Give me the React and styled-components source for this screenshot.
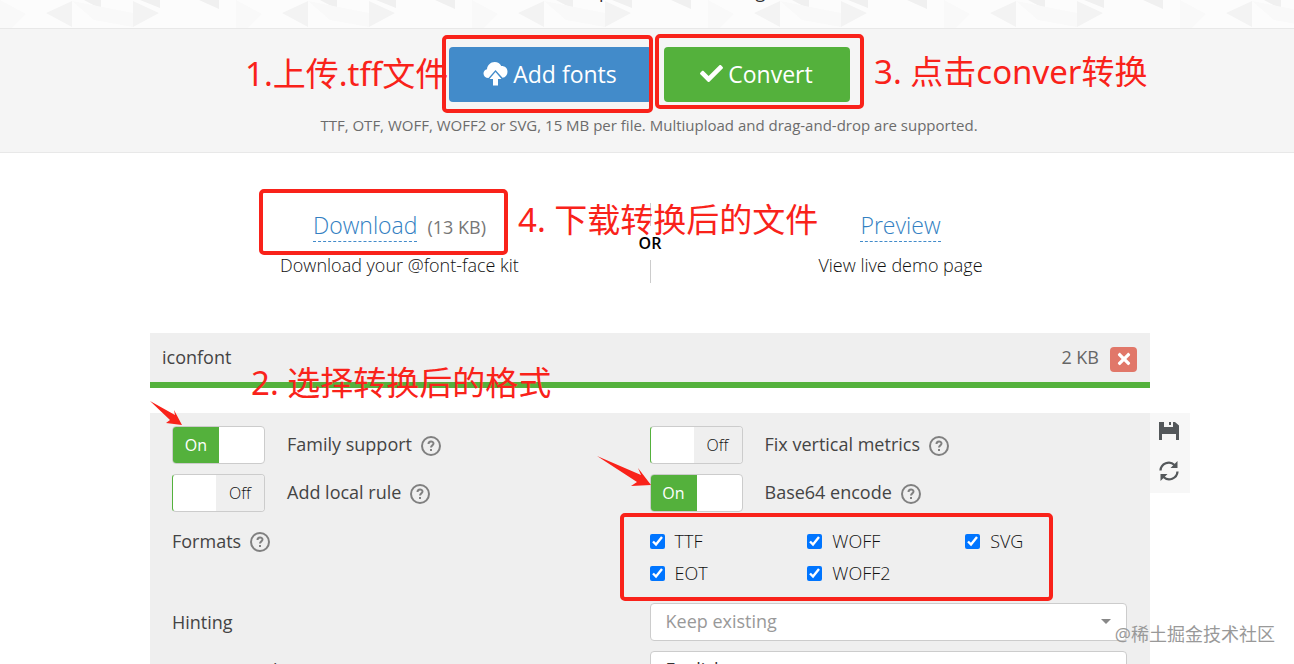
import React, { useState } from 'react';
import styled, { createGlobalStyle, css } from 'styled-components';
import { FaCheck, FaTimes } from 'react-icons/fa';

const formatList = ['TTF', 'WOFF', 'SVG', 'EOT', 'WOFF2'];

const UploadIcon = () => (
  <svg width="25" height="24" viewBox="0 0 25 24" fill="#fff" aria-hidden="true">
    <path d="M5.500 16C2.500 16 .5 14 .5 11.500c0-2.200 1.400-3.800 3.500-4.200C4.200 3.300 7.500 0 11.700 0c3 0 5.300 1.500 6.500 4 3.500-.2 6.300 2 6.300 5.700 0 3.200-2 5.600-5 6.100L12.500 8z" />
    <path d="M12.500 10l6 7h-3.500v6.500h-5V17H6.500z" />
  </svg>
);

const SaveIcon = () => (
  <svg width="20" height="18" viewBox="0 0 20 18" fill="#54585b" aria-hidden="true">
    <path d="M0 0h5v5h9V0h2l4 3.500V18h-3v-6H3v6H0z" />
    <path d="M10 0h2v3h-2z" />
  </svg>
);

const RefreshIcon = () => (
  <svg width="20" height="20" viewBox="0 0 20 20" aria-hidden="true">
    <path d="M1.500 9.500A8.300 8.300 0 0 1 15.500 4M18.500 10.500A8.300 8.300 0 0 1 4.500 16" fill="none" stroke="#54585b" strokeWidth="2.300" />
    <path d="M18.500 0v7h-7zM1.500 20v-7h7z" fill="#54585b" />
  </svg>
);

const HelpIcon = () => (
  <HelpSvg width="20" height="20" viewBox="0 0 20 20" aria-hidden="true">
    <circle cx="10" cy="10" r="9" />
    <path d="M7.500 8c0-3.200 5-3.200 5-.4C12.500 9.500 10 9.300 10 11.600M10 13v2" />
  </HelpSvg>
);

const Option = ({ id, label, defaultOn }) => {
  const [on, setOn] = useState(defaultOn);

  return (
    <OptionRow>
      <Switch $on={on}>
        <SwitchInput id={id} type="checkbox" checked={on} onChange={() => setOn(!on)} />
        <SwitchText $on={on}>{on ? 'On' : 'Off'}</SwitchText>
      </Switch>
      <OptionLabel htmlFor={id}>{label}</OptionLabel>
      <HelpIcon />
    </OptionRow>
  );
};

const App = () => {
  const [formats, setFormats] = useState(formatList);

  const toggleFormat = (name) => {
    setFormats(formats.includes(name) ? formats.filter(f => f !== name) : [...formats, name]);
  };

  return (
    <Page>
      <GlobalStyle />
      <Banner>
        <svg width="100%" height="28" aria-hidden="true">
          <defs>
            <pattern id="facets" width="236" height="28" patternUnits="userSpaceOnUse">
              <path d="M46 13l26-12v26zM133 1l26 12-26 14z" fill="#f3f3f3" />
              <path d="M84 0h17v9zM199 0h20v9zM140 0h20v8z" fill="#f0f0f0" />
              <path d="M72 1l61 12v14L94 20z" fill="#f9f9f9" />
              <path d="M0 0l26 14L12 28H0z" fill="#f9f9f9" />
            </pattern>
          </defs>
          <rect width="100%" height="28" fill="url(#facets)" />
        </svg>
        <Tagline>Modern and simple css @font-face generator</Tagline>
      </Banner>

      <Uploader>
        <ButtonRow>
          <BigButton $color="#428bca" $wide><UploadIcon />Add fonts</BigButton>
          <BigButton $color="#54b13c"><FaCheck aria-hidden="true" />Convert</BigButton>
        </ButtonRow>
        <Hint>TTF, OTF, WOFF, WOFF2 or SVG, 15 MB per file. Multiupload and drag-and-drop are supported.</Hint>
        <Frame $x={-205} $y={6} $w={211} $h={78} />
        <Frame $x={8} $y={5} $w={209} $h={75} />
        <Note $x={-402} $y={23}>1.上传.tff文件</Note>
        <Note $x={227} $y={21}>3. 点击conver转换</Note>
      </Uploader>

      <Container>
        <Results>
          <Result>
            <ResultHead>
              <ResultLink href="#download">Download</ResultLink>
              <Size>(13 KB)</Size>
            </ResultHead>
            <Caption>Download your @font-face kit</Caption>
          </Result>
          <Divider><span>OR</span></Divider>
          <Result>
            <ResultHead>
              <ResultLink href="#preview">Preview</ResultLink>
            </ResultHead>
            <Caption>View live demo page</Caption>
          </Result>
          <Frame $x={-391} $y={36} $w={249} $h={66} />
          <Note $x={-132} $y={45}>4. 下载转换后的文件</Note>
        </Results>

        <FontFile>
          <FileName>iconfont</FileName>
          <span>2 KB</span>
          <RemoveButton aria-label="Remove iconfont"><FaTimes /></RemoveButton>
          <Note $x={-399} $y={28}>2. 选择转换后的格式</Note>
        </FontFile>

        <Settings>
          <Option id="family" label="Family support" defaultOn />
          <Option id="metrics" label="Fix vertical metrics" defaultOn={false} />
          <Option id="local" label="Add local rule" defaultOn={false} />
          <Option id="base64" label="Base64 encode" defaultOn />
          <FieldTitle>Formats <HelpIcon /></FieldTitle>
          <Formats>
            {formatList.map(name => (
              <FormatLabel key={name}>
                <Checkbox type="checkbox" checked={formats.includes(name)} onChange={() => toggleFormat(name)} />
                {name}
              </FormatLabel>
            ))}
          </Formats>
          <FieldTitle as="label" htmlFor="hinting">Hinting</FieldTitle>
          <SelectBox>
            <Select id="hinting" $muted>
              <option>Keep existing</option>
            </Select>
          </SelectBox>
          <FieldTitle as="label" htmlFor="language">Demo page language</FieldTitle>
          <SelectBox>
            <Select id="language">
              <option>English</option>
            </Select>
          </SelectBox>

          <SideTools>
            <ToolButton aria-label="Save settings"><SaveIcon /></ToolButton>
            <ToolButton aria-label="Reset settings"><RefreshIcon /></ToolButton>
          </SideTools>
          <Arrow $x={-500} $y={-12} width="34" height="28" viewBox="0 0 34 28">
            <path d="M0 0L25 14l-1-5 8 15-16-2 4-3z" />
          </Arrow>
          <Arrow $x={-53} $y={43} width="56" height="32" viewBox="0 0 56 32">
            <path d="M0 0L44 19l-3-7 13 17-20 1 6-4z" />
          </Arrow>
          <Frame $x={-30} $y={100} $w={433} $h={88} />
        </Settings>
      </Container>
      <Watermark>@稀土掘金技术社区</Watermark>
    </Page>
  );
};

export default App;

// Component Styled CSS
const GlobalStyle = createGlobalStyle`
  * {
    box-sizing: border-box;
  }

  body {
    margin: 0;
    background: #fff;
  }

  p {
    margin: 0;
  }

  button, select {
    font-family: inherit;
  }
`;

const Page = styled.div`
  position: relative;
  height: 100vh;
  overflow: hidden;
  color: #333;
  font-family: "Open Sans", "Noto Sans CJK SC", sans-serif;
  font-size: 18px;
  line-height: 26px;
`;

const Banner = styled.header`
  position: relative;
  height: 28px;
  overflow: hidden;
  background: #fcfcfc;
`;

const Tagline = styled.p`
  position: absolute;
  bottom: 24px;
  width: 100%;
  padding-left: 6px;
  text-align: center;
`;

const Uploader = styled.section`
  position: relative;
  display: flex;
  flex-direction: column;
  align-items: center;
  height: 125px;
  padding: 18px 0 0 4px;
  background: #f5f5f5;
  border-top: 1px solid #e8e8e8;
  border-bottom: 1px solid #e8e8e8;
`;

const ButtonRow = styled.div`
  display: flex;
  gap: 12px;
`;

const BigButton = styled.button`
  display: flex;
  align-items: center;
  justify-content: center;
  gap: 5px;
  width: ${props => (props.$wide ? '203px' : '186px')};
  height: 55px;
  padding: 0 0 2px;
  border: none;
  border-radius: 4px;
  background: ${props => props.$color};
  color: white;
  font-size: 23px;
`;

const Hint = styled.p`
  margin-top: 10px;
  color: #6c6c6c;
  font-size: 15px;
`;

// red marker box, placed from the middle of its section
const Frame = styled.div`
  position: absolute;
  left: calc(50% + ${props => props.$x}px);
  top: ${props => props.$y}px;
  width: ${props => props.$w}px;
  height: ${props => props.$h}px;
  border: 4px solid #f9221a;
  border-radius: 5px;
  pointer-events: none;
`;

const Note = styled.span`
  position: absolute;
  left: calc(50% + ${props => props.$x}px);
  top: ${props => props.$y}px;
  color: #f9221a;
  font-family: "Noto Sans", "Noto Sans CJK SC", sans-serif;
  font-size: 33px;
  line-height: 44px;
  white-space: nowrap;
  pointer-events: none;
`;

const Container = styled.main`
  box-sizing: content-box;
  max-width: 1000px;
  margin: 0 auto;
  padding-left: 6px;
`;

const Results = styled.section`
  position: relative;
  display: grid;
  grid-template-columns: 1fr 2px 1fr;
  height: 180px;
  padding-top: 50px;
`;

const Result = styled.div`
  text-align: center;
`;

const ResultHead = styled.div`
  display: flex;
  align-items: baseline;
  justify-content: center;
  gap: 10px;
  height: 49px;
  padding-top: 6px;
`;

const ResultLink = styled.a`
  border-bottom: 1px dashed #428bca;
  color: #337fc2;
  font-size: 23px;
  font-weight: 300;
  line-height: 32px;
  text-decoration: none;
`;

const Size = styled.span`
  color: #777;
`;

const Caption = styled.p`
  color: #111;
  font-weight: 300;
`;

const Divider = styled.div`
  display: flex;
  align-items: center;
  justify-content: center;
  height: 80px;
  background: linear-gradient(#ccc, #ccc) center / 1px 100% no-repeat;
  color: #000;
  font-size: 16px;
  font-weight: 600;

  span {
    padding: 4px 0;
    background: #fff;
  }
`;

const FontFile = styled.section`
  position: relative;
  display: flex;
  align-items: center;
  height: 55px;
  padding: 0 13px 0 12px;
  background: #efefef;
  border-bottom: 6px solid #54b13c;
  color: #666;

  > span {
    padding-bottom: 2px;
  }
`;

const FileName = styled.span`
  flex: 1;
  color: #444;
  font-weight: 500;
`;

const RemoveButton = styled.button`
  display: flex;
  align-items: center;
  justify-content: center;
  width: 27px;
  height: 25px;
  margin: 3px 0 0 11px;
  padding: 0;
  border: none;
  border-radius: 4px;
  background: #e17769;
  color: white;
  font-size: 18px;
`;

const Settings = styled.section`
  position: relative;
  display: grid;
  grid-template-columns: 1fr 1fr;
  row-gap: 10px;
  margin-top: 25px;
  padding: 13px 23px 13px 22px;
  background: #efefef;
`;

const HelpSvg = styled.svg`
  margin: 2px 0 0 9px;
  fill: none;
  stroke: #808080;
  stroke-width: 2px;
`;

const OptionRow = styled.div`
  display: flex;
  align-items: center;
  height: 38px;
  color: #444;
`;

const OptionLabel = styled.label`
  margin-left: 22px;
  padding-bottom: 2px;
  font-weight: 500;
`;

const Switch = styled.span`
  position: relative;
  display: block;
  width: 93px;
  height: 38px;
  overflow: hidden;
  border: 1px solid #ccc;
  border-left-color: ${props => (props.$on ? '#ccc' : '#54b13c')};
  border-radius: 4px;
  background: #fff;
`;

const SwitchInput = styled.input`
  position: absolute;
  inset: 0;
  width: 100%;
  height: 100%;
  margin: 0;
  opacity: 0;
`;

const SwitchText = styled.span`
  display: block;
  width: 46px;
  line-height: 36px;
  font-size: 16px;
  text-align: center;
  pointer-events: none;
  ${props => props.$on
    ? css`
        background: #54b13c;
        color: white;
        font-weight: 500;
      `
    : css`
        margin-left: auto;
        width: 48px;
        background: #efefef;
        color: #111;
        font-weight: 300;
      `}
`;

const FieldTitle = styled.div`
  display: flex;
  align-items: center;
  align-self: start;
  height: 38px;
  padding-bottom: 1px;
  color: #444;
  font-weight: 500;
`;

const Formats = styled.div`
  display: grid;
  grid-template-columns: repeat(3, 1fr);
  grid-auto-rows: 32px;
  height: 71px;
  padding: 3px 4px 0 0;
`;

const FormatLabel = styled.label`
  display: flex;
  align-items: center;
  gap: 10px;
  color: #111;
  font-weight: 300;
`;

const Checkbox = styled.input`
  width: 15px;
  height: 15px;
  margin: 0;
  accent-color: #0075ff;
`;

const SelectBox = styled.div`
  position: relative;

  &::after {
    content: '';
    position: absolute;
    right: 16px;
    top: 16px;
    border: 5px solid transparent;
    border-top-color: #888;
    pointer-events: none;
  }
`;

const Select = styled.select`
  appearance: none;
  width: 100%;
  height: 38px;
  padding: 0 15px 2px;
  border: 1px solid #ccc;
  border-radius: 4px;
  background: #fff;
  color: ${props => (props.$muted ? '#999' : '#333')};
  font-size: 18px;
`;

const SideTools = styled.div`
  position: absolute;
  left: 100%;
  top: 0;
  width: 40px;
  height: 80px;
  background: #f7f7f7;
`;

const ToolButton = styled.button`
  display: flex;
  align-items: center;
  justify-content: center;
  width: 38px;
  height: 40px;
  padding: 0 0 5px;
  border: none;
  background: none;
`;

const Arrow = styled.svg`
  position: absolute;
  left: calc(50% + ${props => props.$x}px);
  top: ${props => props.$y}px;
  fill: #f9221a;
  pointer-events: none;
`;

const Watermark = styled.span`
  position: absolute;
  right: 19px;
  bottom: 17px;
  color: #999;
  font-size: 18px;
`;
